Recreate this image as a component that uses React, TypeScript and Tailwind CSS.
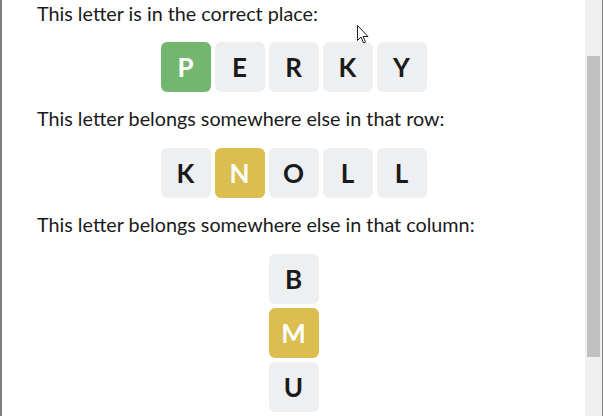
import React from "react";

type TileState = "correct" | "present" | "none";

const Tile = ({ letter, state = "none" }: { letter: string; state?: TileState }) => {
  const cls =
    state === "correct"
      ? "bg-[#73b66f] text-white"
      : state === "present"
      ? "bg-[#dbbd50] text-white"
      : "bg-[#eeeff1] text-[#1a1a1a]";
  return (
    <div
      className={`w-[50px] h-[50px] rounded-[6px] flex items-center justify-center text-[26px] font-bold ${cls}`}
    >
      {letter}
    </div>
  );
};

export default function App() {
  return (
    <div
      className="relative w-[603px] h-[416px] flex bg-white overflow-hidden"
      style={{ fontFamily: "Lato, 'Noto Sans', sans-serif" }}
    >
      <div className="w-[2px] bg-[#7f7f7f]" />
      <div className="flex-1 flex flex-col text-[#1a1a1a]">
        <p className="pl-[35px] text-[19.75px] leading-[28px]">This letter is in the correct place:</p>
        <div className="mt-[14px] flex justify-center gap-[4px]">
          <Tile letter="P" state="correct" />
          <Tile letter="E" />
          <Tile letter="R" />
          <Tile letter="K" />
          <Tile letter="Y" />
        </div>
        <p className="mt-[13px] pl-[35px] text-[19.75px] leading-[28px]">
          This letter belongs somewhere else in that row:
        </p>
        <div className="mt-[15px] flex justify-center gap-[4px]">
          <Tile letter="K" />
          <Tile letter="N" state="present" />
          <Tile letter="O" />
          <Tile letter="L" />
          <Tile letter="L" />
        </div>
        <p className="mt-[13px] pl-[35px] text-[19.75px] leading-[28px]">
          This letter belongs somewhere else in that column:
        </p>
        <div className="mt-[15px] flex flex-col items-center gap-[4px]">
          <Tile letter="B" />
          <Tile letter="M" state="present" />
          <Tile letter="U" />
        </div>
      </div>
      <div className="w-[17px] bg-[#f0f0f0] pt-[56px] px-[2px]">
        <div className="h-[301px] bg-[#c1c1c1]" />
      </div>
      <div className="w-[1px] bg-[#7f7f7f]" />
      <svg
        className="absolute left-[356px] top-[24px]"
        width="14"
        height="21"
        viewBox="0 0 14 21"
      >
        <path
          d="M1.5 1.5 L1.5 16.5 L5 13 L7.5 19 L9.5 18 L7 12.5 L12 12.5 Z"
          fill="white"
          stroke="#222"
          strokeWidth="1"
          strokeLinejoin="miter"
        />
      </svg>
    </div>
  );
}
